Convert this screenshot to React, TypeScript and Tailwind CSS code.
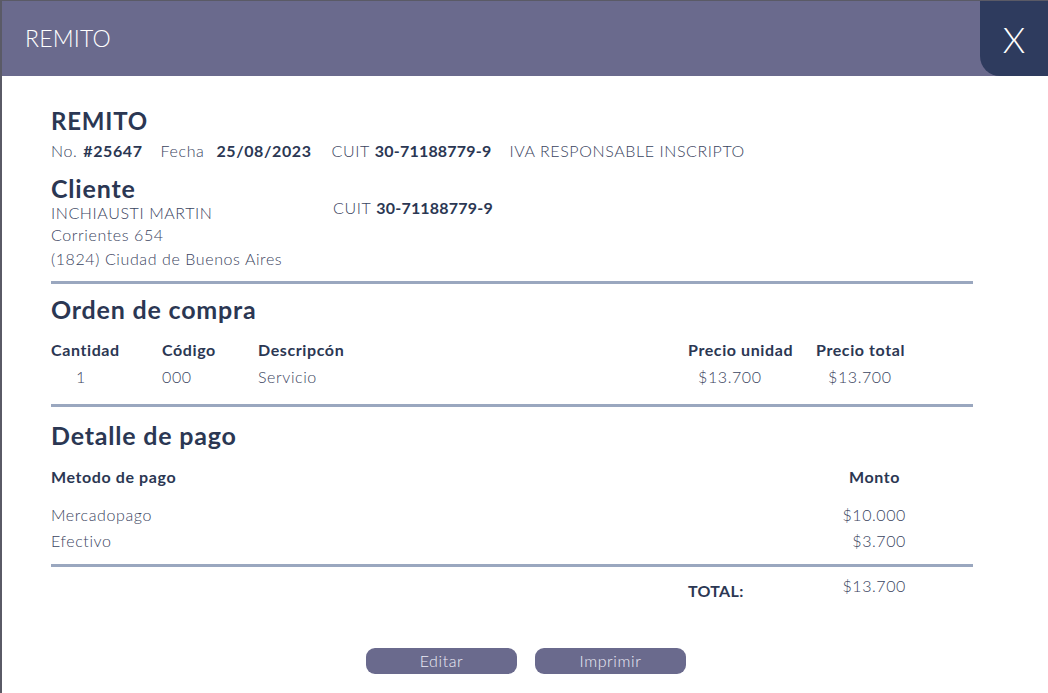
import React from "react";

const Divider = () => <div className="h-[3px] w-[922px] bg-[#9aa7bf]" />;

export default function App() {
  return (
    <div
      className="w-[1048px] h-[693px] bg-white border-l-2 border-t border-[#5a5a66] text-[#2b3753] overflow-hidden flex flex-col tracking-[0.6px]"
      style={{ fontFamily: "Lato, 'Noto Sans', sans-serif" }}
    >
      <div className="h-[75px] bg-[#6a6a8d] flex items-stretch justify-between shrink-0">
        <div className="pl-[23px] flex items-center text-white text-[23px] font-light tracking-[0.2px]">REMITO</div>
        <div className="w-[68px] bg-[#2e3b5e] rounded-bl-[20px] flex items-center justify-center text-white text-[36px] font-light tracking-normal">
          X
        </div>
      </div>

      <div className="pl-[49px] flex flex-col">
        <div className="mt-[30px] text-[24px] font-bold leading-[30px] tracking-[0.8px]">REMITO</div>
        <div className="mt-[4px] flex items-center text-[16px] leading-[22px]">
          <span className="font-light text-[#3a4460]">No.</span>
          <span className="ml-[6px] font-bold">#25647</span>
          <span className="ml-[18px] font-light text-[#3a4460]">Fecha</span>
          <span className="ml-[12px] font-bold">25/08/2023</span>
          <span className="ml-[20px] font-light text-[#3a4460]">CUIT</span>
          <span className="ml-[5px] font-bold tracking-[0.2px]">30-71188779-9</span>
          <span className="ml-[18px] font-light text-[#3a4460]">IVA RESPONSABLE INSCRIPTO</span>
        </div>

        <div className="mt-[13px] flex">
          <div className="w-[282px] flex flex-col">
            <div className="text-[25px] font-bold leading-[27px] tracking-[0.8px]">Cliente</div>
            <div className="font-light text-[16px] leading-[22px] text-[#3a4460]">INCHIAUSTI MARTIN</div>
            <div className="font-light text-[16px] leading-[22px] text-[#3a4460]">Corrientes 654</div>
            <div className="mt-[2px] font-light text-[16px] leading-[22px] text-[#3a4460]">(1824) Ciudad de Buenos Aires</div>
          </div>
          <div className="mt-[22px] text-[16px] leading-[22px]">
            <span className="font-light text-[#3a4460]">CUIT</span>
            <span className="ml-[5px] font-bold tracking-[0.2px]">30-71188779-9</span>
          </div>
        </div>

        <div className="mt-[11px]">
          <Divider />
        </div>

        <div className="mt-[10px] text-[25px] font-bold leading-[30px] tracking-[0.8px]">Orden de compra</div>

        <div className="mt-[15px] grid grid-cols-[111px_96px_430px_128px_100px] text-[16px] leading-[22px]">
          <div className="font-bold">Cantidad</div>
          <div className="font-bold">Código</div>
          <div className="font-bold">Descripcón</div>
          <div className="font-bold">Precio unidad</div>
          <div className="font-bold">Precio total</div>
          <div className="mt-[5px] pl-[25px] font-light text-[#3a4460]">1</div>
          <div className="mt-[5px] font-light text-[#3a4460]">000</div>
          <div className="mt-[5px] font-light text-[#3a4460]">Servicio</div>
          <div className="mt-[5px] pl-[10px] font-light text-[#3a4460]">$13.700</div>
          <div className="mt-[5px] pl-[12px] font-light text-[#3a4460]">$13.700</div>
        </div>

        <div className="mt-[16px]">
          <Divider />
        </div>

        <div className="mt-[13px] text-[25px] font-bold leading-[30px] tracking-[0.8px]">Detalle de pago</div>

        <div className="w-[855px] flex flex-col text-[16px] leading-[22px]">
          <div className="mt-[16px] flex justify-between">
            <span className="font-bold">Metodo de pago</span>
            <span className="font-bold pr-[6px]">Monto</span>
          </div>
          <div className="mt-[16px] flex justify-between font-light text-[#3a4460]">
            <span>Mercadopago</span>
            <span>$10.000</span>
          </div>
          <div className="mt-[4px] flex justify-between font-light text-[#3a4460]">
            <span>Efectivo</span>
            <span>$3.700</span>
          </div>
        </div>

        <div className="mt-[12px]">
          <Divider />
        </div>

        <div className="w-[855px] flex justify-end text-[16px] leading-[22px]">
          <div className="w-[218px] flex justify-between">
            <span className="mt-[13px] font-bold tracking-[0.3px]">TOTAL:</span>
            <span className="mt-[8px] font-light text-[#3a4460]">$13.700</span>
          </div>
        </div>

        <div className="mt-[46px] flex gap-[18px] pl-[315px]">
          <button className="w-[151px] h-[26px] rounded-[9px] bg-[#6a6a8d] text-[#ececf6] text-[16px] font-light leading-[26px]">
            Editar
          </button>
          <button className="w-[151px] h-[26px] rounded-[9px] bg-[#6a6a8d] text-[#ececf6] text-[16px] font-light leading-[26px]">
            Imprimir
          </button>
        </div>
      </div>
    </div>
  );
}
